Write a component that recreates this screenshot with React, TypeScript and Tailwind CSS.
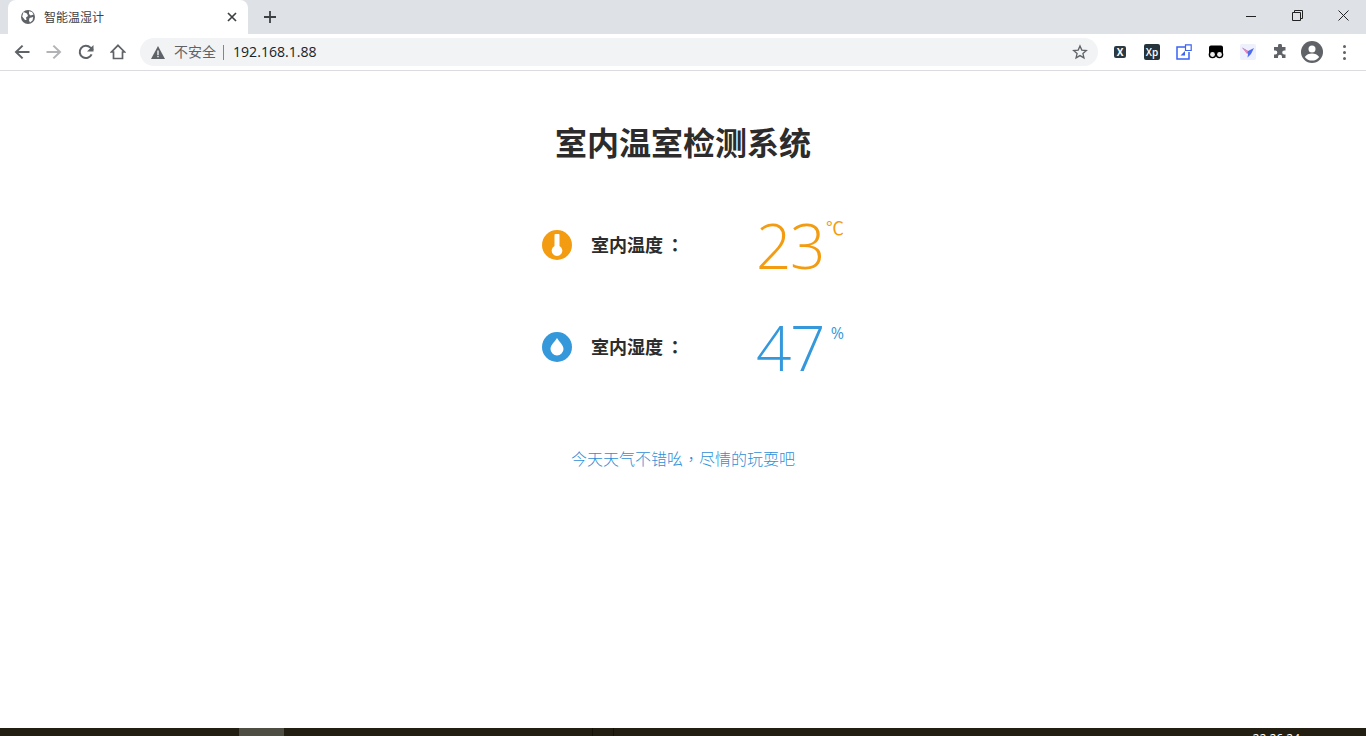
import React from "react";

const cjk = "font-['Open_Sans','Noto_Sans_CJK_SC',sans-serif]";

function Back({ color = "#5f6368", flip = false }: { color?: string; flip?: boolean }) {
  return (
    <svg width="16" height="16" viewBox="0 0 16 16" className={flip ? "-scale-x-100" : ""}>
      <path d="M15.5 8H2.5M8.6 1.6 2 8l6.6 6.4" fill="none" stroke={color} strokeWidth="2" />
    </svg>
  );
}

function Ext({ children }: { children: React.ReactNode }) {
  return <div className="w-8 h-7 flex items-center justify-center shrink-0">{children}</div>;
}

export default function App() {
  return (
    <div className={`w-[1366px] h-[736px] flex flex-col overflow-hidden bg-white ${cjk}`}>
      {/* tab strip */}
      <div className="h-[34px] bg-[#dee1e6] flex items-end shrink-0 pl-2">
        <div className="w-[240px] h-[34px] bg-white rounded-t-[8px] flex items-center pl-3 pr-[11px]">
          <svg width="16" height="16" viewBox="0 0 16 16" className="shrink-0">
            <circle cx="8" cy="8" r="7" fill="#5f6368" />
            <path d="M3.500 3 7 4.500l1 2.500-2 1.500.5 2.500-1.500 0L2.200 7.500zM9 2.200l3 .8 1.600 2.500-3 1L9 5zM9.500 9l3.700-1-.7 3.500-2.500 2-1-2z" fill="#fff" />
          </svg>
          <span className="ml-2 mt-[2px] text-xs text-[#3c4043] flex-1">智能温湿计</span>
          <svg width="10" height="10" viewBox="0 0 10 10">
            <path d="M1 1l8 8M9 1l-8 8" stroke="#3c4043" strokeWidth="1.700" fill="none" />
          </svg>
        </div>
        <div className="h-[34px] ml-[16px] flex items-center">
          <svg width="12" height="12" viewBox="0 0 12 12">
            <path d="M6 0v12M0 6h12" stroke="#3c4043" strokeWidth="1.800" fill="none" />
          </svg>
        </div>
        <div className="ml-auto flex h-[34px]">
          <div className="w-[46px] flex items-center justify-center pb-[2px]">
            <div className="w-[10px] h-px bg-[#222]" />
          </div>
          <div className="w-[46px] flex items-center justify-center pb-[4px]">
            <svg width="11" height="11" viewBox="0 0 11 11">
              <path d="M.5 2.500h8v8h-8zM2.500 2.500v-2h8v8h-2" fill="none" stroke="#222" />
            </svg>
          </div>
          <div className="w-[46px] flex items-center justify-center pb-[4px]">
            <svg width="11" height="11" viewBox="0 0 11 11">
              <path d="M.5.5l10 10M10.500.5l-10 10" fill="none" stroke="#222" />
            </svg>
          </div>
        </div>
      </div>

      {/* toolbar */}
      <div className="h-[37px] bg-white border-b border-[#dadce0] flex items-center shrink-0">
        <div className="w-8 ml-[6px] flex justify-center"><Back /></div>
        <div className="w-8 flex justify-center"><Back color="#b1b3b6" flip /></div>
        <div className="w-8 flex justify-center">
          <svg width="16" height="16" viewBox="0 0 16 16">
            <path d="M13.600 10.400A6.200 6.200 0 1 1 12.400 3.600L15 6" fill="none" stroke="#5f6368" strokeWidth="2" />
            <path d="M15.500 1v6.500H9z" fill="#5f6368" />
          </svg>
        </div>
        <div className="w-8 flex justify-center">
          <svg width="16" height="16" viewBox="0 0 16 16">
            <path d="M8 1.300 14.500 8H12.500v6.500h-9V8H1.500z" fill="none" stroke="#5f6368" strokeWidth="1.700" />
          </svg>
        </div>
        <div className="ml-[6px] w-[958px] h-7 rounded-full bg-[#f1f3f4] flex items-center pl-[11px] pr-[10px]">
          <svg width="14" height="13" viewBox="0 0 14 13">
            <path d="M7 0 14 13H0z" fill="#5f6368" />
            <path d="M6.300 4.500h1.400v4.500H6.300zM6.300 9.800h1.400v1.400H6.300z" fill="#f1f3f4" />
          </svg>
          <span className="ml-[9px] text-[14px] leading-none text-[#5f6368]">不安全</span>
          <div className="w-px h-[15px] bg-[#80868b] ml-[7px]" />
          <span className="ml-[9px] text-[14.1px] leading-none text-[#202124] font-['Open_Sans',sans-serif]">192.168.1.88</span>
          <svg width="16" height="16" viewBox="0 0 24 24" className="ml-auto">
            <path d="M12 3l2.700 6.200 6.800.6-5.100 4.500 1.500 6.600L12 17.400 6.100 20.900l1.500-6.600L2.500 9.800l6.800-.6z" fill="none" stroke="#5f6368" strokeWidth="2" />
          </svg>
        </div>
        <div className="ml-[6px] flex items-center">
          <Ext>
            <div className="w-[12px] h-[12px] rounded-[2px] bg-[#2b3a42] text-white text-[10px] font-bold flex items-center justify-center leading-none">X</div>
          </Ext>
          <Ext>
            <div className="w-4 h-4 rounded-[2px] bg-[#25343b] text-white text-[10px] font-semibold flex items-center justify-center leading-none">Xp</div>
          </Ext>
          <Ext>
            <svg width="16" height="16" viewBox="0 0 16 16">
              <path d="M9 3H1v12h12V8" fill="none" stroke="#3b63f3" strokeWidth="1.500" />
              <path d="M9.500.8h5.700v5.700H9.500z" fill="#fff" stroke="#3b63f3" strokeWidth="1.200" />
              <path d="M4.500 11.500 9 7v4.500z" fill="#3b63f3" />
            </svg>
          </Ext>
          <Ext>
            <svg width="16" height="16" viewBox="0 0 16 16">
              <path d="M3 1.500h10a2 2 0 0 1 2 2V9H1V3.500a2 2 0 0 1 2-2z" fill="#000" />
              <circle cx="4.500" cy="10.500" r="3.800" fill="#000" />
              <circle cx="11.500" cy="10.500" r="3.800" fill="#000" />
              <circle cx="4.500" cy="10.500" r="2.400" fill="#eee" />
              <circle cx="11.500" cy="10.500" r="2.400" fill="#eee" />
            </svg>
          </Ext>
          <Ext>
            <svg width="16" height="16" viewBox="0 0 16 16">
              <rect width="16" height="16" rx="2" fill="#eef0fb" />
              <path d="M2 3.500 8 7l6-3-3 6-3.500 3.500L8 10z" fill="#4f6bf0" />
              <path d="M2 3.500 8 7l-1 3z" fill="#e887b8" />
            </svg>
          </Ext>
          <Ext>
            <svg width="16" height="16" viewBox="0 0 16 16">
              <path d="M6 2.200a2 2 0 0 1 4 0V3.500h3.500V7h-1.300a2 2 0 0 0 0 4h1.300v3.500H10v-1.300a2 2 0 0 0-4 0v1.300H2V11h1.300a2 2 0 0 0 0-4H2V3.500h4z" fill="#5f6368" transform="translate(0 -.5)" />
            </svg>
          </Ext>
          <Ext>
            <svg width="22" height="22" viewBox="0 0 22 22">
              <circle cx="11" cy="11" r="11" fill="#5f6368" />
              <circle cx="11" cy="8" r="3.500" fill="#fff" />
              <path d="M3.800 16c1.500-2.500 4.500-3.500 7.200-3.500s5.700 1 7.200 3.500a9 9 0 0 1-14.400 0z" fill="#fff" />
            </svg>
          </Ext>
          <Ext>
            <div className="flex flex-col gap-[3px]">
              <div className="w-[3px] h-[3px] rounded-full bg-[#5f6368]" />
              <div className="w-[3px] h-[3px] rounded-full bg-[#5f6368]" />
              <div className="w-[3px] h-[3px] rounded-full bg-[#5f6368]" />
            </div>
          </Ext>
        </div>
      </div>

      {/* page */}
      <div className="flex-1 flex flex-col items-center min-h-0">
        <h1 className="mt-[50px] text-[32px] leading-[44px] font-bold text-[#2c2c2c]">室内温室检测系统</h1>

        <div className="mt-[29px] ml-[20px] w-[302px] flex flex-col">
          <Reading
            label="室内温度"
            value="23"
            unit="℃"
            unitClass="mt-[5px] text-[18px]"
            color="text-[#f39c12]"
            bg="bg-[#f39c12]"
            icon={
              <svg width="16" height="22" viewBox="0 0 16 22">
                <path d="M5.500 1.500a2.500 2.500 0 0 1 5 0V12a5.300 5.300 0 1 1-5 0z" fill="#fff" />
              </svg>
            }
          />
          <Reading
            label="室内湿度"
            value="47"
            unit="%"
            unitClass="mt-[8px] text-[16px] font-medium"
            color="text-[#3498db]"
            bg="bg-[#3498db]"
            icon={
              <svg width="14" height="18" viewBox="0 0 14 18">
                <path d="M7 0c2 3.500 6.500 7 6.500 11a6.500 6.500 0 0 1-13 0C.5 7 5 3.500 7 0z" fill="#fff" />
              </svg>
            }
          />
        </div>

        <p className="mt-[48px] text-[16px] leading-[24px] font-light text-[#2f8fd6]">
          今天天气不错吆<span className="font-['Noto_Sans_CJK_TC',sans-serif]">，</span>尽情的玩耍吧
        </p>
      </div>

      {/* taskbar */}
      <div className="h-2 shrink-0 bg-[#221f12] flex items-start overflow-hidden">
        <div className="ml-[239px] w-[45px] h-2 bg-[#4e4d43]" />
        <div className="ml-[308px] w-[22px] h-2 border-x border-[#151309]" />
        <span className="ml-auto mr-[66px] mt-[5px] text-[12px] leading-none text-white whitespace-nowrap">22:26:24</span>
      </div>
    </div>
  );
}

function Reading({
  label,
  value,
  unit,
  unitClass,
  color,
  bg,
  icon,
}: {
  label: string;
  value: string;
  unit: string;
  unitClass: string;
  color: string;
  bg: string;
  icon: React.ReactNode;
}) {
  return (
    <div className="h-[102px] flex items-center">
      <div className={`w-[30px] h-[30px] rounded-full ${bg} flex items-center justify-center shrink-0`}>{icon}</div>
      <div className="ml-[19px] w-[165px] text-[18px] font-bold text-[#2c2c2c] whitespace-nowrap">
        {label}
        <span className="ml-[3px] font-['Noto_Sans_CJK_TC',sans-serif]">：</span>
      </div>
      <div className={`flex-1 flex items-start ${color}`}>
        <span className="text-[62px] leading-[64px] font-light tracking-[-1.5px]">{value}</span>
        <span className={`ml-auto leading-[20px] ${unitClass}`}>{unit}</span>
      </div>
    </div>
  );
}
